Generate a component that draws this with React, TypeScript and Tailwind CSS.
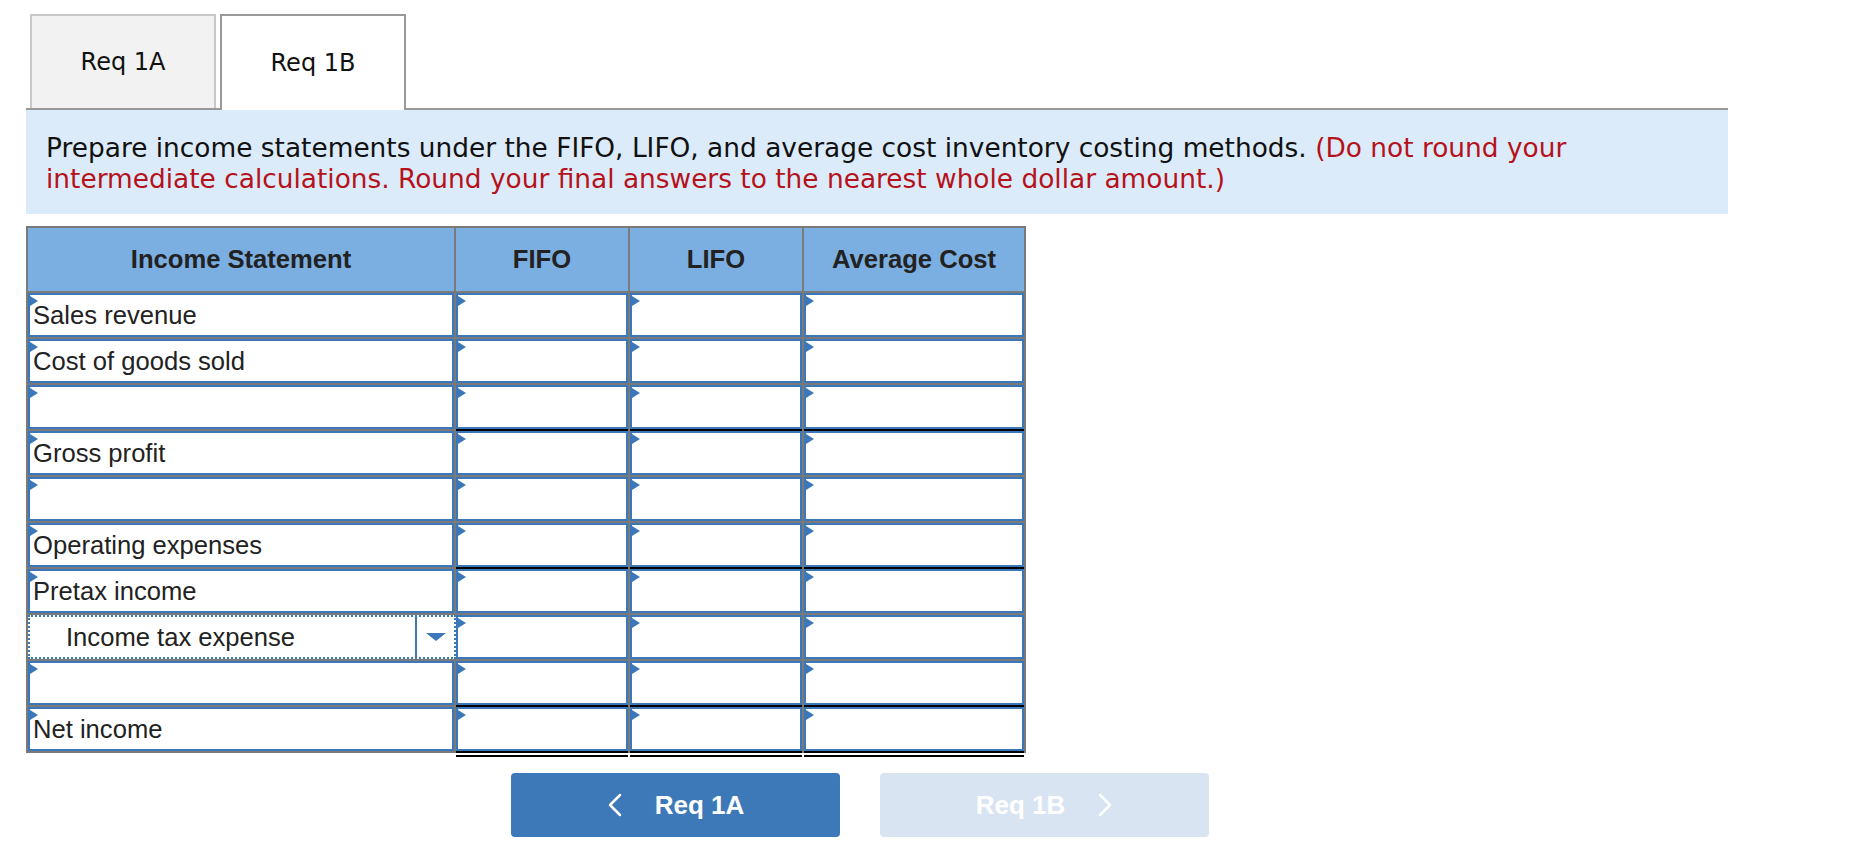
import React from "react";

type Row = { label: string; line?: boolean; double?: boolean; select?: boolean };

const rows: Row[] = [
  { label: "Sales revenue" },
  { label: "Cost of goods sold" },
  { label: "", line: true },
  { label: "Gross profit" },
  { label: "" },
  { label: "Operating expenses", line: true },
  { label: "Pretax income" },
  { label: "Income tax expense", select: true },
  { label: "", line: true },
  { label: "Net income", double: true },
];

const Marker = () => (
  <span className="absolute left-0 top-[1px] w-0 h-0 border-y-[5px] border-y-transparent border-l-[8px] border-l-[#3c77b9]" />
);

const NumCell = ({ row }: { row: Row }) => {
  let extra = "";
  if (row.line) extra = "after:absolute after:left-[-2px] after:right-[-2px] after:bottom-[-4px] after:h-[2px] after:bg-black";
  if (row.double) extra = "shadow-[0_2px_0_#000,0_4px_0_#fff,0_6px_0_#000]";
  return (
    <div className={"relative h-[44px] bg-white border-2 border-[#3c77b9] " + extra}>
      <Marker />
    </div>
  );
};

export default function App() {
  return (
    <div className="min-h-screen bg-white pt-[14px] pl-[26px]" style={{ fontFamily: "'DejaVu Sans', Verdana, sans-serif" }}>
      {/* tabs */}
      <div className="w-[1702px] flex items-end gap-[4px] pl-[4px] border-b-2 border-[#999]">
        <div className="w-[186px] h-[94px] flex items-center justify-center bg-[#f2f2f2] border-2 border-b-0 border-[#c8c8c8] text-[24px] text-[#111]">
          Req 1A
        </div>
        <div className="w-[186px] h-[96px] -mb-[2px] flex items-center justify-center bg-white border-2 border-b-0 border-[#999] text-[24px] text-[#111]">
          Req 1B
        </div>
      </div>

      {/* instructions */}
      <div className="w-[1702px] bg-[#dcebf9] pl-[20px] pr-[20px] pt-[22px] pb-[20px] text-[26.4px] leading-[31px] text-[#111]">
        Prepare income statements under the FIFO, LIFO, and average cost inventory costing methods.{" "}
        <span className="text-[#b5121b]">
          (Do not round your intermediate calculations. Round your final answers to the nearest whole dollar amount.)
        </span>
      </div>

      {/* table */}
      <div
        className="mt-[12px] w-max grid grid-cols-[426px_172px_172px_220px] gap-[2px] p-[2px] bg-[#7a7a7a] text-[25.6px] text-[#222]"
        style={{ fontFamily: "'Liberation Sans', Arial, sans-serif" }}
      >
        {["Income Statement", "FIFO", "LIFO", "Average Cost"].map((h) => (
          <div key={h} className="h-[63px] bg-[#7baee1] flex items-center justify-center font-bold">
            {h}
          </div>
        ))}
        {rows.map((r, i) => (
          <React.Fragment key={i}>
            {r.select ? (
              <div className="h-[44px] bg-white border-2 border-dotted border-[#3c77b9] flex -mr-[2px]">
                <div className="flex-1 flex items-center pl-[36px]">{r.label}</div>
                <div className="w-[39px] border-l-2 border-[#3c77b9] flex items-center justify-center">
                  <span className="w-0 h-0 border-x-[10px] border-x-transparent border-t-[8px] border-t-[#3c77b9]" />
                </div>
              </div>
            ) : (
              <div className="relative h-[44px] bg-white border-2 border-[#3c77b9] flex items-center pl-[3px]">
                <Marker />
                {r.label}
              </div>
            )}
            <NumCell row={r} />
            <NumCell row={r} />
            <NumCell row={r} />
          </React.Fragment>
        ))}
      </div>

      {/* nav buttons */}
      <div className="mt-[20px] pl-[485px] flex gap-[40px]" style={{ fontFamily: "'Liberation Sans', Arial, sans-serif" }}>
        <button className="w-[329px] h-[64px] rounded-[4px] bg-[#3d79b8] text-white font-bold text-[26px] flex items-center justify-center gap-[32px]">
          <svg width="16" height="24" viewBox="0 0 16 24" fill="none">
            <polyline points="13,2 3,12 13,22" stroke="white" strokeWidth="2.5" strokeLinecap="round" strokeLinejoin="round" />
          </svg>
          <span>Req 1A</span>
        </button>
        <button className="w-[329px] h-[64px] rounded-[4px] bg-[#d8e4f1] text-white font-bold text-[26px] flex items-center justify-center gap-[32px]">
          <span>Req 1B</span>
          <svg width="16" height="24" viewBox="0 0 16 24" fill="none">
            <polyline points="3,2 13,12 3,22" stroke="white" strokeWidth="2.5" strokeLinecap="round" strokeLinejoin="round" />
          </svg>
        </button>
      </div>
    </div>
  );
}
